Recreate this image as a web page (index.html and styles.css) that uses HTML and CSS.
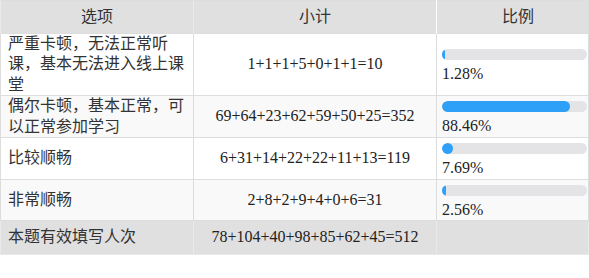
FILE: index.html
```html
<!DOCTYPE html>
<html lang="zh-CN">
<head>
  <meta charset="UTF-8" />
  <meta name="viewport" content="width=device-width, initial-scale=1.0" />
  <title>选项统计</title>
  <link rel="stylesheet" href="styles.css">
</head>
<body>
  <table class="stat-table">
    <colgroup>
      <col class="col-option">
      <col class="col-count">
      <col class="col-ratio">
    </colgroup>
    <thead>
      <tr>
        <th>选项</th>
        <th>小计</th>
        <th class="ratio-head">比例</th>
      </tr>
    </thead>
    <tbody>
      <tr>
        <td class="option">严重卡顿，无法正常听课，基本无法进入线上课堂</td>
        <td class="count">1+1+1+5+0+1+1=10</td>
        <td class="ratio">
          <div class="bar"><div class="bar-fill" style="width: 1.28%"></div></div>
          <div class="percent">1.28%</div>
        </td>
      </tr>
      <tr>
        <td class="option">偶尔卡顿，基本正常，可以正常参加学习</td>
        <td class="count">69+64+23+62+59+50+25=352</td>
        <td class="ratio">
          <div class="bar"><div class="bar-fill" style="width: 88.46%"></div></div>
          <div class="percent">88.46%</div>
        </td>
      </tr>
      <tr>
        <td class="option">比较顺畅</td>
        <td class="count">6+31+14+22+22+11+13=119</td>
        <td class="ratio">
          <div class="bar"><div class="bar-fill" style="width: 7.69%"></div></div>
          <div class="percent">7.69%</div>
        </td>
      </tr>
      <tr>
        <td class="option">非常顺畅</td>
        <td class="count">2+8+2+9+4+0+6=31</td>
        <td class="ratio">
          <div class="bar"><div class="bar-fill" style="width: 2.56%"></div></div>
          <div class="percent">2.56%</div>
        </td>
      </tr>
    </tbody>
    <tfoot>
      <tr>
        <td class="option">本题有效填写人次</td>
        <td class="count">78+104+40+98+85+62+45=512</td>
        <td class="ratio-foot"></td>
      </tr>
    </tfoot>
  </table>
</body>
</html>
```

FILE: styles.css
```css
/* Page */
body {
  margin: 0;
  background: #fff;
  font-family: "Liberation Serif", "Noto Sans CJK SC", serif;
  font-size: 16px;
  color: #222;
}

/* Statistics table */
.stat-table {
  width: 100%;
  table-layout: fixed;
  border-collapse: collapse;
  border: 1px solid #ddd;
  line-height: 20.5px;
}
.col-option {
  width: 193px;
}
.col-count {
  width: 243px;
}
th {
  background: #e0e0e0;
  font-weight: normal;
  color: #333;
  padding: 6px 7px 5px;
  text-align: center;
  border-left: 1px solid #e9e9e9;
}
th.ratio-head {
  border-left: 1px solid #fff;
  padding-left: 18px;
}
td {
  padding: 0 7px;
  border: 1px solid #ddd;
  vertical-align: middle;
}
tbody tr:nth-child(even) td {
  background: #f9f9f9;
}
.option {
  text-align: left;
  color: #333;
}
.count {
  text-align: center;
}

/* Ratio bar */
.ratio {
  padding: 0 2px 0 5px;
}
.bar {
  height: 11px;
  margin: 5px 0 4px;
  width: 145px;
  background: #e4e4e6;
  border-radius: 6px;
  overflow: hidden;
}
.bar-fill {
  height: 100%;
  min-width: 3px;
  background: #2ea0f7;
  border-radius: 6px;
}

/* Footer row */
tfoot td {
  background: #e0e0e0;
  padding-top: 6px;
  padding-bottom: 6px;
  border-color: #e9e9e9;
}
tfoot .ratio-foot {
  border-left: 1px solid #fff;
}
```
